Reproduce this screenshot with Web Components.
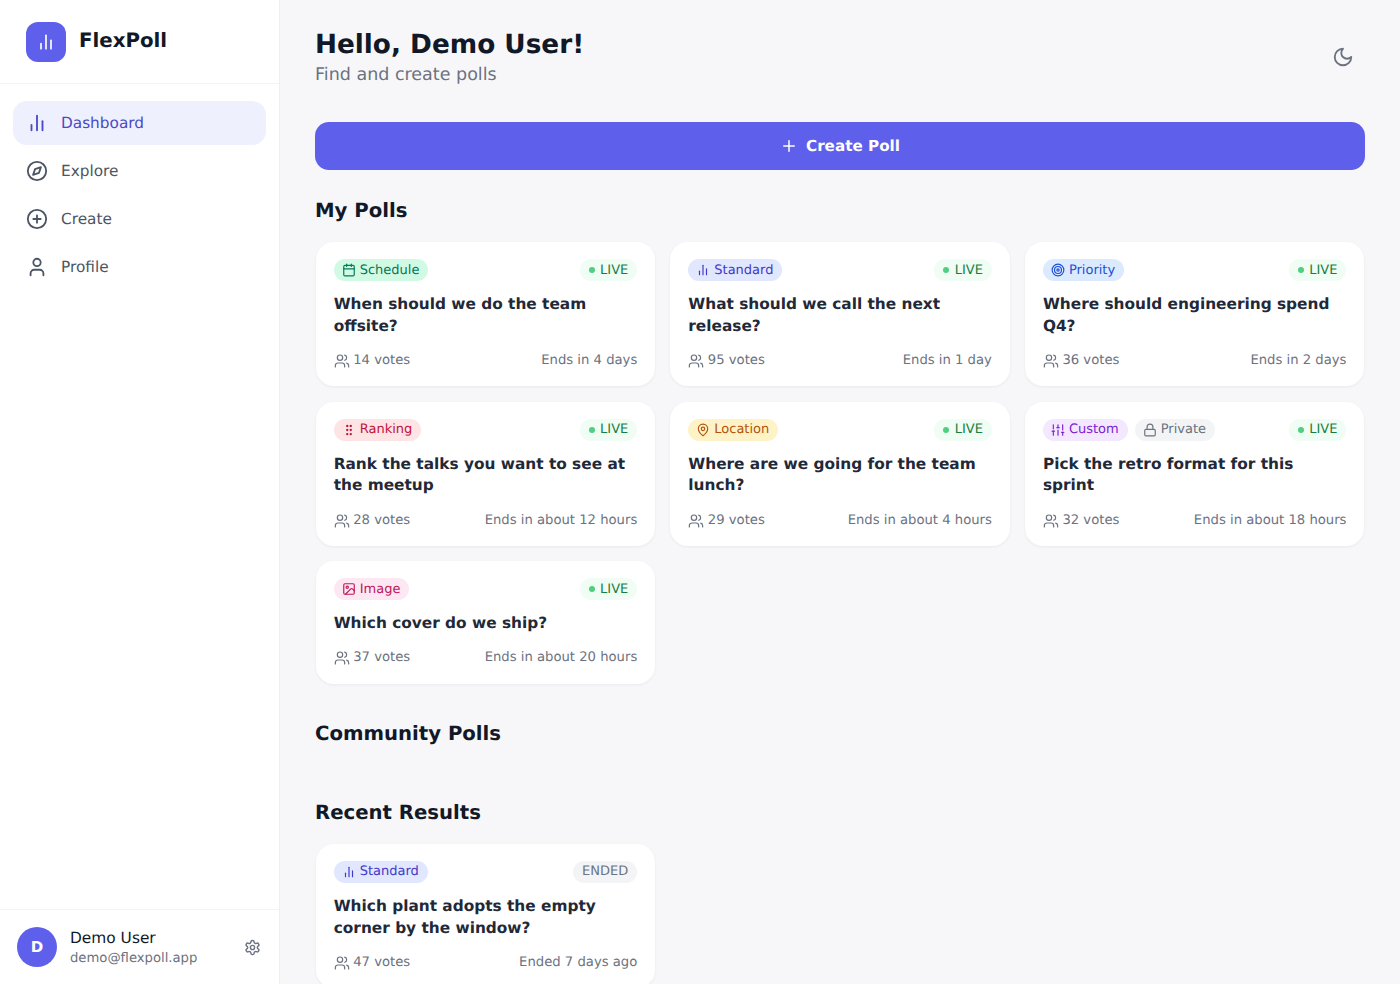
<!DOCTYPE html>
<html lang="en">
<head>
<meta charset="utf-8">
<title>FlexPoll</title>
<style>
    html, body { margin: 0; height: 100%; overflow: hidden; background: #f7f7fa; }
    body { font-family: "DejaVu Sans", sans-serif; color: #111827; text-rendering: geometricPrecision; }
</style>
</head>
<body>
<flex-app>
    <app-sidebar slot="sidebar">
        <nav-item icon="chart" active>Dashboard</nav-item>
        <nav-item icon="compass">Explore</nav-item>
        <nav-item icon="plusCircle">Create</nav-item>
        <nav-item icon="user">Profile</nav-item>
    </app-sidebar>

    <page-header title="Hello, Demo User!" subtitle="Find and create polls"></page-header>
    <create-button>Create Poll</create-button>

    <poll-section heading="My Polls">
        <poll-card kind="schedule" votes="14 votes" ends="Ends in 4 days">When should we do the team offsite?</poll-card>
        <poll-card kind="standard" votes="95 votes" ends="Ends in 1 day">What should we call the next release?</poll-card>
        <poll-card kind="priority" votes="36 votes" ends="Ends in 2 days">Where should engineering spend Q4?</poll-card>
        <poll-card kind="ranking" votes="28 votes" ends="Ends in about 12 hours">Rank the talks you want to see at the meetup</poll-card>
        <poll-card kind="location" votes="29 votes" ends="Ends in about 4 hours">Where are we going for the team lunch?</poll-card>
        <poll-card kind="custom" private votes="32 votes" ends="Ends in about 18 hours">Pick the retro format for this sprint</poll-card>
        <poll-card kind="image" votes="37 votes" ends="Ends in about 20 hours">Which cover do we ship?</poll-card>
    </poll-section>

    <poll-section heading="Community Polls" empty></poll-section>

    <poll-section heading="Recent Results">
        <poll-card kind="standard" ended votes="47 votes" ends="Ended 7 days ago">Which plant adopts the empty corner by the window?</poll-card>
    </poll-section>
</flex-app>

<script>
const ICONS = {
    chart: '<path d="M18 20V10"/><path d="M12 20V4"/><path d="M6 20v-6"/>',
    compass: '<circle cx="12" cy="12" r="10"/><path d="m16.24 7.76-2.12 6.36-6.36 2.12 2.12-6.36 6.36-2.12z"/>',
    plusCircle: '<circle cx="12" cy="12" r="10"/><path d="M8 12h8"/><path d="M12 8v8"/>',
    user: '<path d="M19 21v-2a4 4 0 0 0-4-4H9a4 4 0 0 0-4 4v2"/><circle cx="12" cy="7" r="4"/>',
    moon: '<path d="M12 3a6 6 0 0 0 9 9 9 9 0 1 1-9-9Z"/>',
    plus: '<path d="M5 12h14"/><path d="M12 5v14"/>',
    settings: '<path d="M12.22 2h-.44a2 2 0 0 0-2 2v.18a2 2 0 0 1-1 1.73l-.43.25a2 2 0 0 1-2 0l-.15-.08a2 2 0 0 0-2.73.73l-.22.38a2 2 0 0 0 .73 2.73l.15.1a2 2 0 0 1 1 1.72v.51a2 2 0 0 1-1 1.74l-.15.09a2 2 0 0 0-.73 2.73l.22.38a2 2 0 0 0 2.73.73l.15-.08a2 2 0 0 1 2 0l.43.25a2 2 0 0 1 1 1.73V20a2 2 0 0 0 2 2h.44a2 2 0 0 0 2-2v-.18a2 2 0 0 1 1-1.73l.43-.25a2 2 0 0 1 2 0l.15.08a2 2 0 0 0 2.73-.73l.22-.39a2 2 0 0 0-.73-2.73l-.15-.08a2 2 0 0 1-1-1.74v-.5a2 2 0 0 1 1-1.74l.15-.09a2 2 0 0 0 .73-2.73l-.22-.38a2 2 0 0 0-2.73-.73l-.15.08a2 2 0 0 1-2 0l-.43-.25a2 2 0 0 1-1-1.73V4a2 2 0 0 0-2-2z"/><circle cx="12" cy="12" r="3"/>',
    users: '<path d="M16 21v-2a4 4 0 0 0-4-4H6a4 4 0 0 0-4 4v2"/><circle cx="9" cy="7" r="4"/><path d="M22 21v-2a4 4 0 0 0-3-3.87"/><path d="M16 3.13a4 4 0 0 1 0 7.75"/>',
    calendar: '<rect x="3" y="4" width="18" height="18" rx="2"/><path d="M16 2v4"/><path d="M8 2v4"/><path d="M3 10h18"/>',
    target: '<circle cx="12" cy="12" r="10"/><circle cx="12" cy="12" r="6"/><circle cx="12" cy="12" r="2"/>',
    grip: '<circle cx="9" cy="12" r="1"/><circle cx="9" cy="5" r="1"/><circle cx="9" cy="19" r="1"/><circle cx="15" cy="12" r="1"/><circle cx="15" cy="5" r="1"/><circle cx="15" cy="19" r="1"/>',
    pin: '<path d="M20 10c0 6-8 12-8 12s-8-6-8-12a8 8 0 0 1 16 0Z"/><circle cx="12" cy="10" r="3"/>',
    sliders: '<path d="M4 21v-7"/><path d="M4 10V3"/><path d="M12 21v-9"/><path d="M12 8V3"/><path d="M20 21v-5"/><path d="M20 12V3"/><path d="M2 14h4"/><path d="M10 8h4"/><path d="M18 16h4"/>',
    lock: '<rect x="3" y="11" width="18" height="11" rx="2"/><path d="M7 11V7a5 5 0 0 1 10 0v4"/>',
    image: '<rect x="3" y="3" width="18" height="18" rx="2"/><circle cx="9" cy="9" r="2"/><path d="m21 15-3.086-3.086a2 2 0 0 0-2.828 0L6 21"/>'
};

function icon(name, size, width = 2) {
    return `<svg width="${size}" height="${size}" viewBox="0 0 24 24" fill="none" stroke="currentColor" stroke-width="${width}" stroke-linecap="round" stroke-linejoin="round" style="display:block;flex:none">${ICONS[name]}</svg>`;
}

const KINDS = {
    schedule: { label: "Schedule", icon: "calendar", bg: "#d1fae5", fg: "#047857" },
    standard: { label: "Standard", icon: "chart", bg: "#e0e7ff", fg: "#4338ca" },
    priority: { label: "Priority", icon: "target", bg: "#dbeafe", fg: "#1d4ed8" },
    ranking: { label: "Ranking", icon: "grip", bg: "#ffe4e6", fg: "#be123c" },
    location: { label: "Location", icon: "pin", bg: "#fef3c7", fg: "#b45309" },
    custom: { label: "Custom", icon: "sliders", bg: "#f3e8ff", fg: "#7e22ce" },
    image: { label: "Image", icon: "image", bg: "#fce7f3", fg: "#be185d" }
};

class FlexApp extends HTMLElement {
    constructor() {
        super();
        this.attachShadow({ mode: "open" });
    }

    connectedCallback() {
        this.shadowRoot.innerHTML = `
        <style>
            :host { display: flex; height: 100vh; overflow: hidden; }
            main {
                flex: 1;
                min-width: 0;
                padding: 29px 35px 0;
                display: flex;
                flex-direction: column;
            }
        </style>
        <slot name="sidebar"></slot>
        <main><slot></slot></main>
        `;
    }
}

class AppSidebar extends HTMLElement {
    constructor() {
        super();
        this.attachShadow({ mode: "open" });
    }

    connectedCallback() {
        this.shadowRoot.innerHTML = `
        <style>
            :host {
                display: flex;
                flex-direction: column;
                flex: none;
                width: 279px;
                height: 100%;
                box-sizing: content-box;
                background: #fff;
                border-right: 1px solid #eeeff2;
            }
            .brand {
                display: flex;
                align-items: center;
                gap: 13px;
                height: 84px;
                padding: 0 26px;
                box-sizing: border-box;
                border-bottom: 1px solid #f3f4f6;
                flex: none;
            }
            .logo {
                width: 40px;
                height: 40px;
                border-radius: 12px;
                background: #5e60ec;
                color: #fff;
                display: flex;
                align-items: center;
                justify-content: center;
            }
            .name { font-size: 19.8px; font-weight: 700; color: #111827; margin-top: -3px; }
            nav {
                flex: 1;
                padding: 17px 13px;
                display: flex;
                flex-direction: column;
                gap: 4px;
            }
            footer {
                flex: none;
                height: 74px;
                border-top: 1px solid #f3f4f6;
                padding: 0 17px;
                display: flex;
                align-items: center;
                gap: 13px;
            }
            .avatar {
                width: 40px;
                height: 40px;
                border-radius: 50%;
                background: #5e60ec;
                color: #fff;
                font-size: 15px;
                font-weight: 700;
                display: flex;
                align-items: center;
                justify-content: center;
                flex: none;
            }
            .who { flex: 1; min-width: 0; padding-top: 2px; }
            .who b { display: block; font-weight: 400; font-size: 15.4px; line-height: 21px; color: #111827; }
            .who span { display: block; font-size: 13.2px; line-height: 20px; color: #6b7280; }
            .gear { color: #6b7280; margin-right: 1px; }
        </style>
        <div class="brand">
            <div class="logo">${icon("chart", 20)}</div>
            <div class="name">FlexPoll</div>
        </div>
        <nav><slot></slot></nav>
        <footer>
            <div class="avatar">D</div>
            <div class="who"><b>Demo User</b><span>demo@flexpoll.app</span></div>
            <div class="gear">${icon("settings", 17)}</div>
        </footer>
        `;
    }
}

class NavItem extends HTMLElement {
    constructor() {
        super();
        this.attachShadow({ mode: "open" });
    }

    connectedCallback() {
        this.shadowRoot.innerHTML = `
        <style>
            :host {
                display: flex;
                align-items: center;
                gap: 13px;
                height: 44px;
                padding: 0 13px;
                border-radius: 14px;
                font-size: 15.3px;
                color: #4b5563;
            }
            :host([active]) { background: #eef0fd; color: #4a49c6; }
        </style>
        ${icon(this.getAttribute("icon"), 22)}
        <span><slot></slot></span>
        `;
    }
}

class PageHeader extends HTMLElement {
    constructor() {
        super();
        this.attachShadow({ mode: "open" });
    }

    connectedCallback() {
        this.shadowRoot.innerHTML = `
        <style>
            :host {
                display: flex;
                align-items: flex-start;
                justify-content: space-between;
                margin-bottom: 34px;
            }
            h1 { margin: 0; font-size: 26.3px; line-height: 33px; font-weight: 700; color: #111827; }
            p { margin: 0; font-size: 17.5px; line-height: 26px; color: #6b7280; }
            button {
                all: unset;
                width: 44px;
                height: 44px;
                margin-top: 6px;
                display: flex;
                align-items: center;
                justify-content: center;
                color: #6b7280;
            }
        </style>
        <div>
            <h1>${this.getAttribute("title")}</h1>
            <p>${this.getAttribute("subtitle")}</p>
        </div>
        <button>${icon("moon", 22)}</button>
        `;
    }
}

class CreateButton extends HTMLElement {
    constructor() {
        super();
        this.attachShadow({ mode: "open" });
    }

    connectedCallback() {
        this.shadowRoot.innerHTML = `
        <style>
            :host {
                display: flex;
                align-items: center;
                justify-content: center;
                gap: 8px;
                height: 48px;
                border-radius: 14px;
                background: #5e60ec;
                color: #fff;
                font-size: 15.2px;
                font-weight: 700;
                flex: none;
            }
        </style>
        ${icon("plus", 18)}
        <slot></slot>
        `;
    }
}

class PollSection extends HTMLElement {
    constructor() {
        super();
        this.attachShadow({ mode: "open" });
    }

    connectedCallback() {
        this.shadowRoot.innerHTML = `
        <style>
            :host { display: block; margin-top: 27px; }
            :host([empty]) { margin-top: 36.3px; margin-bottom: 6.4px; }
            h2 { margin: 0 0 17.4px; font-size: 19.7px; line-height: 28px; font-weight: 700; color: #111827; }
            .grid {
                display: grid;
                grid-template-columns: repeat(3, 1fr);
                gap: 15.5px 15px;
                margin: 0 0.5px 0 0.7px;
            }
        </style>
        <h2>${this.getAttribute("heading")}</h2>
        <div class="grid"><slot></slot></div>
        `;
    }
}

class PollCard extends HTMLElement {
    constructor() {
        super();
        this.attachShadow({ mode: "open" });
    }

    connectedCallback() {
        const kind = KINDS[this.getAttribute("kind")];
        const state = this.hasAttribute("ended")
            ? `<span class="status ended">ENDED</span>`
            : `<span class="status"><i></i>LIVE</span>`;
        const priv = this.hasAttribute("private")
            ? `<span class="pill" style="background:#f3f4f6;color:#6b7280">${icon("lock", 14)}Private</span>`
            : "";
        this.shadowRoot.innerHTML = `
        <style>
            :host {
                display: block;
                background: #fff;
                border-radius: 18px;
                padding: 17px 18px 15.2px;
                box-shadow: 0 1px 3px rgba(17, 24, 39, 0.06);
            }
            .top { display: flex; align-items: center; gap: 7px; }
            .pill, .status {
                display: inline-flex;
                align-items: center;
                gap: 4px;
                height: 22px;
                padding: 0 9px 0 8px;
                border-radius: 11px;
                font-size: 13px;
            }
            .status { margin-left: auto; padding: 0 9px; background: #f0fdf4; color: #15803d; gap: 5.5px; }
            .status i { width: 6px; height: 6px; border-radius: 50%; background: #4fcf80; }
            .status.ended { background: #f3f4f6; color: #6b7280; }
            h3 {
                margin: 12.8px 0 13.4px;
                font-size: 15.35px;
                line-height: 21.8px;
                font-weight: 700;
                color: #1f2937;
            }
            .meta {
                display: flex;
                justify-content: space-between;
                align-items: center;
                font-size: 13.2px;
                line-height: 20px;
                color: #6b7280;
            }
            .votes { display: flex; align-items: center; gap: 3.5px; }
        </style>
        <div class="top">
            <span class="pill" style="background:${kind.bg};color:${kind.fg}">${icon(kind.icon, 14)}${kind.label}</span>
            ${priv}
            ${state}
        </div>
        <h3><slot></slot></h3>
        <div class="meta">
            <span class="votes">${icon("users", 16, 1.8)}${this.getAttribute("votes")}</span>
            <span>${this.getAttribute("ends")}</span>
        </div>
        `;
    }
}

customElements.define("flex-app", FlexApp);
customElements.define("app-sidebar", AppSidebar);
customElements.define("nav-item", NavItem);
customElements.define("page-header", PageHeader);
customElements.define("create-button", CreateButton);
customElements.define("poll-section", PollSection);
customElements.define("poll-card", PollCard);
</script>
</body>
</html>
